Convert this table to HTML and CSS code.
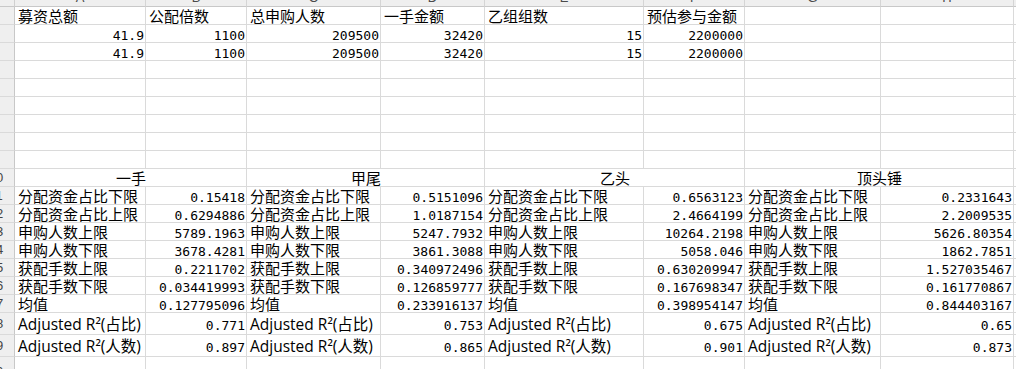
FILE: index.html
```html
<!DOCTYPE html>
<html lang="zh">
<head>
<meta charset="utf-8">
<title>Sheet</title>
<link rel="stylesheet" href="styles.css">
</head>
<body>
<div class="sheet">
  <div class="corner"></div>
  <div class="ch"><span>A</span></div><div class="ch"><span>B</span></div><div class="ch"><span>C</span></div><div class="ch"><span>D</span></div><div class="ch"><span>E</span></div><div class="ch"><span>F</span></div><div class="ch"><span>G</span></div><div class="ch"><span>H</span></div><div class="ch"><span>I</span></div>

  <div class="rh"><span>1</span></div>
  <div class="c">募资总额</div><div class="c">公配倍数</div><div class="c">总申购人数</div><div class="c">一手金额</div><div class="c">乙组组数</div><div class="c">预估参与金额</div><div class="c"></div><div class="c"></div><div class="c"></div>

  <div class="rh"><span>2</span></div>
  <div class="c n">41.9</div><div class="c n">1100</div><div class="c n">209500</div><div class="c n">32420</div><div class="c n">15</div><div class="c n">2200000</div><div class="c"></div><div class="c"></div><div class="c"></div>

  <div class="rh"><span>3</span></div>
  <div class="c n">41.9</div><div class="c n">1100</div><div class="c n">209500</div><div class="c n">32420</div><div class="c n">15</div><div class="c n">2200000</div><div class="c"></div><div class="c"></div><div class="c"></div>

  <div class="rh"><span>4</span></div>
  <div class="c"></div><div class="c"></div><div class="c"></div><div class="c"></div><div class="c"></div><div class="c"></div><div class="c"></div><div class="c"></div><div class="c"></div>
  <div class="rh"><span>5</span></div>
  <div class="c"></div><div class="c"></div><div class="c"></div><div class="c"></div><div class="c"></div><div class="c"></div><div class="c"></div><div class="c"></div><div class="c"></div>
  <div class="rh"><span>6</span></div>
  <div class="c"></div><div class="c"></div><div class="c"></div><div class="c"></div><div class="c"></div><div class="c"></div><div class="c"></div><div class="c"></div><div class="c"></div>
  <div class="rh"><span>7</span></div>
  <div class="c"></div><div class="c"></div><div class="c"></div><div class="c"></div><div class="c"></div><div class="c"></div><div class="c"></div><div class="c"></div><div class="c"></div>
  <div class="rh"><span>8</span></div>
  <div class="c"></div><div class="c"></div><div class="c"></div><div class="c"></div><div class="c"></div><div class="c"></div><div class="c"></div><div class="c"></div><div class="c"></div>
  <div class="rh"><span>9</span></div>
  <div class="c"></div><div class="c"></div><div class="c"></div><div class="c"></div><div class="c"></div><div class="c"></div><div class="c"></div><div class="c"></div><div class="c"></div>

  <div class="rh"><span>10</span></div>
  <div class="c m">一手</div><div class="c m">甲尾</div><div class="c m">乙头</div><div class="c m">顶头锤</div><div class="c"></div>

  <div class="rh"><span>11</span></div>
  <div class="c">分配资金占比下限</div><div class="c n">0.15418</div><div class="c">分配资金占比下限</div><div class="c n">0.5151096</div><div class="c">分配资金占比下限</div><div class="c n">0.6563123</div><div class="c">分配资金占比下限</div><div class="c n">0.2331643</div><div class="c"></div>

  <div class="rh"><span>12</span></div>
  <div class="c">分配资金占比上限</div><div class="c n">0.6294886</div><div class="c">分配资金占比上限</div><div class="c n">1.0187154</div><div class="c">分配资金占比上限</div><div class="c n">2.4664199</div><div class="c">分配资金占比上限</div><div class="c n">2.2009535</div><div class="c"></div>

  <div class="rh"><span>13</span></div>
  <div class="c">申购人数上限</div><div class="c n">5789.1963</div><div class="c">申购人数上限</div><div class="c n">5247.7932</div><div class="c">申购人数上限</div><div class="c n">10264.2198</div><div class="c">申购人数上限</div><div class="c n">5626.80354</div><div class="c"></div>

  <div class="rh"><span>14</span></div>
  <div class="c">申购人数下限</div><div class="c n">3678.4281</div><div class="c">申购人数下限</div><div class="c n">3861.3088</div><div class="c">申购人数下限</div><div class="c n">5058.046</div><div class="c">申购人数下限</div><div class="c n">1862.7851</div><div class="c"></div>

  <div class="rh"><span>15</span></div>
  <div class="c">获配手数上限</div><div class="c n">0.2211702</div><div class="c">获配手数上限</div><div class="c n">0.340972496</div><div class="c">获配手数上限</div><div class="c n">0.630209947</div><div class="c">获配手数上限</div><div class="c n">1.527035467</div><div class="c"></div>

  <div class="rh"><span>16</span></div>
  <div class="c">获配手数下限</div><div class="c n">0.034419993</div><div class="c">获配手数下限</div><div class="c n">0.126859777</div><div class="c">获配手数下限</div><div class="c n">0.167698347</div><div class="c">获配手数下限</div><div class="c n">0.161770867</div><div class="c"></div>

  <div class="rh"><span>17</span></div>
  <div class="c">均值</div><div class="c n">0.127795096</div><div class="c">均值</div><div class="c n">0.233916137</div><div class="c">均值</div><div class="c n">0.398954147</div><div class="c">均值</div><div class="c n">0.844403167</div><div class="c"></div>

  <div class="rh"><span>18</span></div>
  <div class="c adj">Adjusted R²(占比)</div><div class="c n an">0.771</div><div class="c adj">Adjusted R²(占比)</div><div class="c n an">0.753</div><div class="c adj">Adjusted R²(占比)</div><div class="c n an">0.675</div><div class="c adj">Adjusted R²(占比)</div><div class="c n an">0.65</div><div class="c"></div>

  <div class="rh"><span>19</span></div>
  <div class="c adj">Adjusted R²(人数)</div><div class="c n an">0.897</div><div class="c adj">Adjusted R²(人数)</div><div class="c n an">0.865</div><div class="c adj">Adjusted R²(人数)</div><div class="c n an">0.901</div><div class="c adj">Adjusted R²(人数)</div><div class="c n an">0.873</div><div class="c"></div>

  <div class="rh"><span>20</span></div>
  <div class="c"></div><div class="c"></div><div class="c"></div><div class="c"></div><div class="c"></div><div class="c"></div><div class="c"></div><div class="c"></div><div class="c"></div>
</div>
</body>
</html>
```

FILE: styles.css
```css
html, body {
  margin: 0;
  padding: 0;
  background: #ffffff;
  overflow: hidden;
}

.sheet {
  display: grid;
  grid-template-columns: 15px 131px 101px 134px 104px 159px 101px 136px 133px 60px;
  grid-template-rows: 7px repeat(17, 18px) 22px 22px 30px;
  width: 1016px;
  height: 369px;
  overflow: hidden;
  font-family: "Noto Sans CJK SC", sans-serif;
  font-size: 15px;
  color: #000;
}

.corner {
  background: #efefef;
  border-right: 1px solid #d0d0d0;
  border-bottom: 1px solid #c8c8c8;
}

.ch {
  background: #efefef;
  border-right: 1px solid #d5d5d5;
  border-bottom: 1px solid #c8c8c8;
  overflow: hidden;
  text-align: center;
  font-family: "Liberation Sans", sans-serif;
  font-size: 13px;
  color: #4a4a4a;
}

.ch span {
  display: block;
  line-height: 12px;
  margin-top: -8px;
}

.rh {
  background: #efefef;
  border-right: 1px solid #c8c8c8;
  border-bottom: 1px solid #dadada;
  overflow: hidden;
  display: flex;
  align-items: center;
  font-family: "Liberation Sans", sans-serif;
  font-size: 13px;
  color: #444;
}

.rh span {
  display: block;
  flex: none;
  width: 32px;
  margin-left: -20px;
  text-align: center;
}

.c {
  box-sizing: border-box;
  border-right: 1px solid #dadada;
  border-bottom: 1px solid #dadada;
  display: flex;
  align-items: flex-end;
  padding: 0 2px 0 3px;
  white-space: nowrap;
  overflow: hidden;
  line-height: 16px;
}

.n {
  justify-content: flex-end;
  font-family: "DejaVu Sans Mono", "Liberation Mono", monospace;
  font-size: 13px;
  line-height: 13px;
  padding-right: 1px;
}

.m {
  grid-column: span 2;
  justify-content: center;
}

.adj {
  font-family: "Open Sans", "Noto Sans CJK SC", sans-serif;
  font-size: 15.5px;
  line-height: 20px;
}

.an {
  padding-bottom: 2px;
}
```
